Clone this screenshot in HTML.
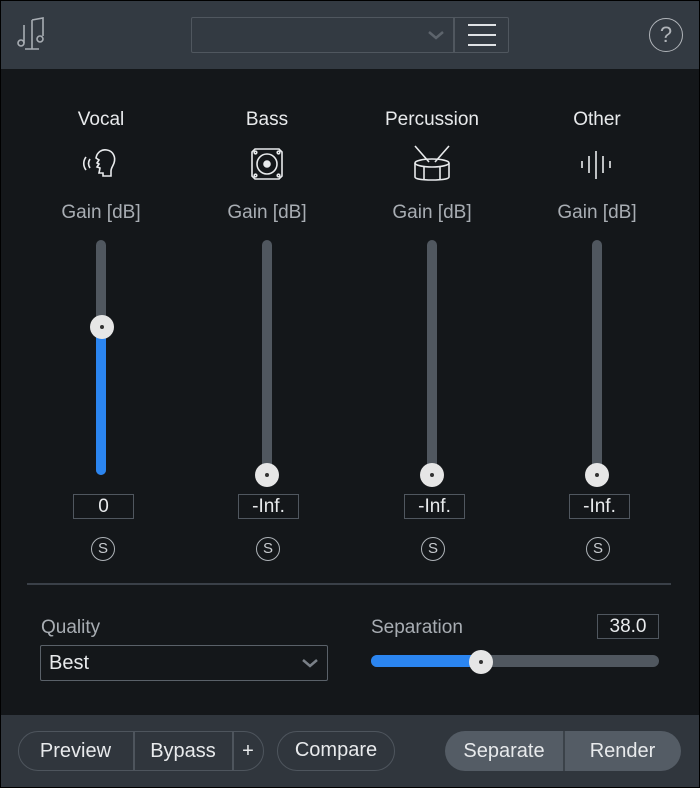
<!DOCTYPE html>
<html><head><meta charset="utf-8"><style>
*{margin:0;padding:0;box-sizing:border-box}
body{width:700px;height:788px;background:#000;font-family:"Liberation Sans",sans-serif;color:#e8eaec;position:relative;overflow:hidden}
.top{position:absolute;left:1px;top:1px;width:698px;height:68px;background:#333a42}
.main{position:absolute;left:1px;top:69px;width:698px;height:646px;background:#14171a}
.bot{position:absolute;left:1px;top:715px;width:698px;height:72px;background:#30363d}
.a{position:absolute}
.lbl{position:absolute;font-size:19px;text-align:center;width:160px}
.gain{color:#a8adb3}
.track{position:absolute;width:10px;height:235px;top:240px;background:#50575f;border-radius:5px}
.thumb{position:absolute;width:24px;height:24px;border-radius:50%;background:#e6e6e6}
.thumb::after{content:"";position:absolute;left:10px;top:10px;width:4px;height:4px;border-radius:50%;background:#333}
.val{position:absolute;top:494px;width:61px;height:25px;border:1.5px solid #50575f;font-size:19px;text-align:center;line-height:24px}
.s{position:absolute;top:537px;width:24px;height:24px;border:1.5px solid #aeb3b8;border-radius:50%;font-size:15px;text-align:center;line-height:22px;color:#c8cbcf}
.btn{position:absolute;top:731px;height:40px;font-size:20px;line-height:40px;text-align:center}
</style></head><body>
<div class="top"></div><div class="main"></div><div class="bot"></div>
<svg class="a" style="left:14px;top:16px" width="34" height="38" viewBox="0 0 34 38" fill="none" stroke="#a8adb3" stroke-width="1.6"><path d="M18 4v29M11 33h14M18 4l11-2v18"/><circle cx="7" cy="27" r="3"/><path d="M10 27V9"/><circle cx="26" cy="23" r="3"/></svg>
<div class="a" style="left:191px;top:17px;width:318px;height:36px;border:1.5px solid #50575f;border-radius:2px"></div>
<div class="a" style="left:453px;top:18px;width:1.5px;height:34px;background:#50575f"></div>
<svg class="a" style="left:427px;top:29px" width="18" height="12"><path d="M2 3l7 6 7-6" stroke="#5d646c" stroke-width="2.5" fill="none"/></svg>
<svg class="a" style="left:467px;top:23px" width="30" height="24"><path d="M1 2h28M1 12h28M1 22h28" stroke="#dfe2e5" stroke-width="2"/></svg>
<div class="a" style="left:649px;top:18px;width:34px;height:34px;border:1.5px solid #b0b4b9;border-radius:50%;text-align:center;font-size:22px;line-height:32px;color:#b0b4b9">?</div>

<div class="lbl" style="left:21px;top:109px">Vocal</div>
<div class="lbl" style="left:187px;top:109px">Bass</div>
<div class="lbl" style="left:352px;top:109px">Percussion</div>
<div class="lbl" style="left:517px;top:109px">Other</div>

<svg class="a" style="left:82px;top:146px" width="38" height="36" fill="none" stroke="#e8eaec" stroke-width="1.6"><path d="M14 12c1-6 6-9 11-8 6 1 9 7 7 13-1 3-3 5-3 8v5h-8v-3h-4l1-5-3-1 2-3-2-1 2-3z"/><path d="M8 13c-2 3-2 6 0 9M4 11c-3 4-3 9 0 13"/></svg>
<svg class="a" style="left:249px;top:146px" width="36" height="36" fill="none" stroke="#e8eaec" stroke-width="1.6"><path d="M6 3h24l3 3v24l-3 3H6l-3-3V6z"/><circle cx="18" cy="18" r="10"/><circle cx="18" cy="18" r="3" fill="#e8eaec"/><circle cx="6.5" cy="6.5" r="1.3"/><circle cx="29.5" cy="6.5" r="1.3"/><circle cx="6.5" cy="29.5" r="1.3"/><circle cx="29.5" cy="29.5" r="1.3"/></svg>
<svg class="a" style="left:412px;top:144px" width="40" height="38" fill="none" stroke="#e8eaec" stroke-width="1.6"><path d="M3 2l14 16M37 2L23 18"/><ellipse cx="20" cy="19" rx="17" ry="4"/><path d="M3 19v14c0 2 8 3 17 3s17-1 17-3V19M12 23v12M28 23v12"/></svg>
<svg class="a" style="left:580px;top:150px" width="34" height="30" stroke="#e8eaec" stroke-width="1.6"><path d="M2 11v7M9 6v17M16 1v28M23 6v17M30 11v7"/></svg>

<div class="lbl gain" style="left:21px;top:202px">Gain [dB]</div>
<div class="lbl gain" style="left:187px;top:202px">Gain [dB]</div>
<div class="lbl gain" style="left:352px;top:202px">Gain [dB]</div>
<div class="lbl gain" style="left:517px;top:202px">Gain [dB]</div>

<div class="track" style="left:96px"></div>
<div class="a" style="left:96px;top:327px;width:10px;height:148px;background:#2b85f0;border-radius:5px"></div>
<div class="thumb" style="left:90px;top:315px"></div>
<div class="track" style="left:262px"></div><div class="thumb" style="left:255px;top:463px"></div>
<div class="track" style="left:427px"></div><div class="thumb" style="left:420px;top:463px"></div>
<div class="track" style="left:592px"></div><div class="thumb" style="left:585px;top:463px"></div>

<div class="val" style="left:73px">0</div>
<div class="val" style="left:238px">-Inf.</div>
<div class="val" style="left:404px">-Inf.</div>
<div class="val" style="left:569px">-Inf.</div>
<div class="s" style="left:91px">S</div>
<div class="s" style="left:256px">S</div>
<div class="s" style="left:421px">S</div>
<div class="s" style="left:586px">S</div>

<div class="a" style="left:27px;top:583px;width:644px;height:1.5px;background:#3a4048"></div>
<div class="a gain" style="left:41px;top:617px;font-size:19px">Quality</div>
<div class="a" style="left:40px;top:645px;width:288px;height:36px;border:1.5px solid #5a6169;border-radius:2px;font-size:20px;line-height:35px;padding-left:8px">Best</div>
<svg class="a" style="left:300px;top:656px" width="20" height="14"><path d="M3 4l7 6 7-6" stroke="#7a8088" stroke-width="2.5" fill="none"/></svg>
<div class="a gain" style="left:371px;top:617px;font-size:19px">Separation</div>
<div class="a" style="left:597px;top:614px;width:62px;height:25px;border:1.5px solid #50575f;font-size:19px;text-align:center;line-height:24px">38.0</div>
<div class="a" style="left:371px;top:655px;width:288px;height:12px;background:#50575f;border-radius:6px"></div>
<div class="a" style="left:371px;top:655px;width:110px;height:12px;background:#2b85f0;border-radius:6px"></div>
<div class="thumb" style="left:469px;top:650px"></div>

<div class="btn" style="left:18px;width:246px;border:1.5px solid #4e555d;border-radius:20px"></div>
<div class="btn" style="left:18px;width:115px">Preview</div>
<div class="a" style="left:133px;top:732px;width:1.5px;height:38px;background:#4e555d"></div>
<div class="btn" style="left:134px;width:98px">Bypass</div>
<div class="a" style="left:232px;top:732px;width:1.5px;height:38px;background:#4e555d"></div>
<div class="btn" style="left:233px;width:30px">+</div>
<div class="btn" style="left:277px;width:118px;border:1.5px solid #4e555d;border-radius:20px;line-height:37px">Compare</div>
<div class="btn" style="left:445px;width:236px;background:#545c65;border-radius:20px"></div>
<div class="btn" style="left:445px;width:118px">Separate</div>
<div class="a" style="left:563px;top:731px;width:1.5px;height:40px;background:#3b4249"></div>
<div class="btn" style="left:564px;width:117px">Render</div>
</body></html>
